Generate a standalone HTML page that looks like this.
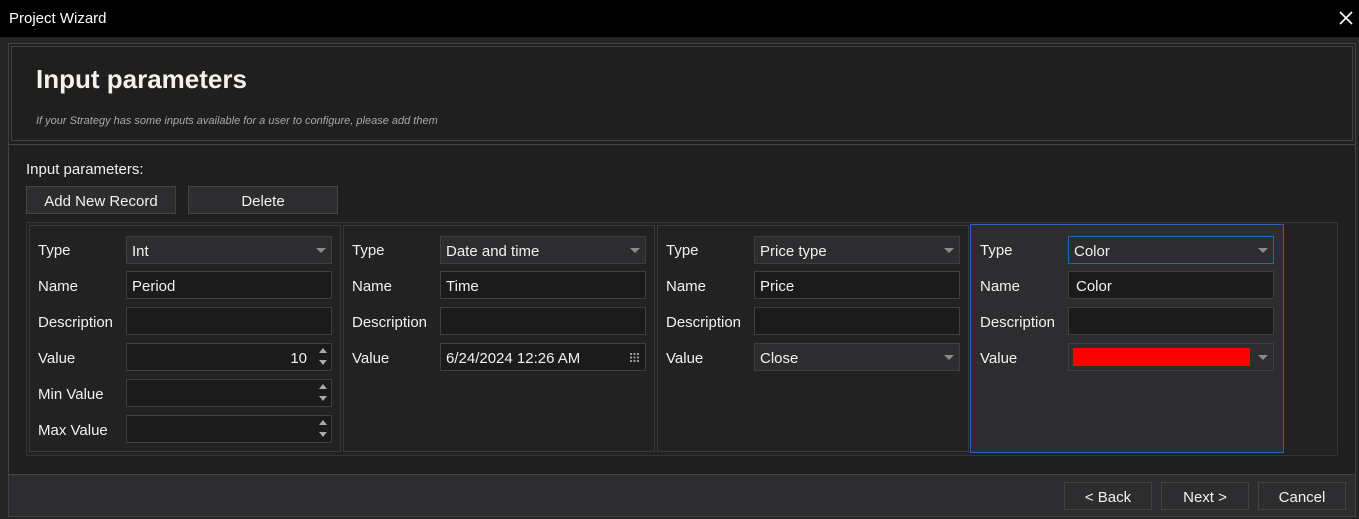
<!DOCTYPE html>
<html><head><meta charset="utf-8"><style>
*{box-sizing:border-box;margin:0;padding:0}
body{width:1359px;height:519px;background:#252526;font-family:"Liberation Sans",sans-serif;color:#f1f1f1;position:relative;overflow:hidden;font-size:15px}
.a{position:absolute}
.tb{left:0;top:0;width:1359px;height:37px;background:#000}
.frame{left:8px;top:43px;width:1348px;height:474px;border:1px solid #434346;background:#1f1f1f}
.card{background:#222;border:1px solid #3a3a3a}
.lbl{font-size:15px;color:#f1f1f1;margin-top:1px}
.in{background:#1b1b1b;border:1px solid #3f3f42;height:28px;width:206px;padding:2px 0 0 5px;line-height:26px;font-size:15px}
.dd{background:#2d2d30}
.arr{position:absolute;right:5px;top:11px;width:0;height:0;border-left:5px solid transparent;border-right:5px solid transparent;border-top:5px solid #8a8a8a}
.sp{position:absolute;right:4px;width:0;height:0;border-left:4px solid transparent;border-right:4px solid transparent}
.btn{background:#2d2d30;border:1px solid #444;text-align:center;font-size:15px;line-height:26px;padding-top:2px}
</style></head><body>
<div class="a tb"></div>
<div class="a" style="left:9px;top:10px;font-size:15px;color:#fff">Project Wizard</div>
<svg class="a" style="left:1339px;top:11px" width="14" height="14"><path d="M1 1L13 13M13 1L1 13" stroke="#fff" stroke-width="1.6"/></svg>
<div class="a frame"></div>
<div class="a" style="left:11px;top:46px;width:1342px;height:95px;border:1px solid #434346"></div>
<div class="a" style="left:36px;top:64px;font-size:26px;font-weight:bold;color:#f5f0e8">Input parameters</div>
<div class="a" style="left:36px;top:115px;font-size:11px;font-style:italic;color:#aaa">If your Strategy has some inputs available for a user to configure, please add them</div>
<div class="a" style="left:9px;top:144px;width:1346px;height:1px;background:#434346"></div>
<div class="a" style="left:26px;top:161px">Input parameters:</div>
<div class="a btn" style="left:26px;top:186px;width:150px;height:28px">Add New Record</div>
<div class="a btn" style="left:188px;top:186px;width:150px;height:28px">Delete</div>
<div class="a" style="left:26px;top:222px;width:1312px;height:234px;border:1px solid #333;background:#222"></div>

<div class="a card" style="left:29px;top:225px;width:312px;height:227px"></div>
<div class="a lbl" style="left:38px;top:241px">Type</div>
<div class="a in dd" style="left:126px;top:236px">Int<span class="arr"></span></div>
<div class="a lbl" style="left:38px;top:277px">Name</div>
<div class="a in" style="left:126px;top:271px">Period</div>
<div class="a lbl" style="left:38px;top:313px">Description</div>
<div class="a in" style="left:126px;top:307px"></div>
<div class="a lbl" style="left:38px;top:349px">Value</div>
<div class="a in" style="left:126px;top:343px;text-align:right;padding-right:24px">10<span class="sp" style="top:4px;border-bottom:5px solid #aaa"></span><span class="sp" style="top:16px;border-top:5px solid #aaa"></span></div>
<div class="a lbl" style="left:38px;top:385px">Min Value</div>
<div class="a in" style="left:126px;top:379px"><span class="sp" style="top:4px;border-bottom:5px solid #aaa"></span><span class="sp" style="top:16px;border-top:5px solid #aaa"></span></div>
<div class="a lbl" style="left:38px;top:421px">Max Value</div>
<div class="a in" style="left:126px;top:415px"><span class="sp" style="top:4px;border-bottom:5px solid #aaa"></span><span class="sp" style="top:16px;border-top:5px solid #aaa"></span></div>

<div class="a card" style="left:343px;top:225px;width:312px;height:227px"></div>
<div class="a lbl" style="left:352px;top:241px">Type</div>
<div class="a in dd" style="left:440px;top:236px">Date and time<span class="arr"></span></div>
<div class="a lbl" style="left:352px;top:277px">Name</div>
<div class="a in" style="left:440px;top:271px">Time</div>
<div class="a lbl" style="left:352px;top:313px">Description</div>
<div class="a in" style="left:440px;top:307px"></div>
<div class="a lbl" style="left:352px;top:349px">Value</div>
<div class="a in" style="left:440px;top:343px">6/24/2024 12:26 AM
<svg style="position:absolute;right:6px;top:9px" width="9" height="9" fill="#999"><rect x="0" y="0" width="2" height="2"/><rect x="3.5" y="0" width="2" height="2"/><rect x="7" y="0" width="2" height="2"/><rect x="0" y="3.5" width="2" height="2"/><rect x="3.5" y="3.5" width="2" height="2"/><rect x="7" y="3.5" width="2" height="2"/><rect x="0" y="7" width="2" height="2"/><rect x="3.5" y="7" width="2" height="2"/><rect x="7" y="7" width="2" height="2"/></svg></div>

<div class="a card" style="left:657px;top:225px;width:312px;height:227px"></div>
<div class="a lbl" style="left:666px;top:241px">Type</div>
<div class="a in dd" style="left:754px;top:236px">Price type<span class="arr"></span></div>
<div class="a lbl" style="left:666px;top:277px">Name</div>
<div class="a in" style="left:754px;top:271px">Price</div>
<div class="a lbl" style="left:666px;top:313px">Description</div>
<div class="a in" style="left:754px;top:307px"></div>
<div class="a lbl" style="left:666px;top:349px">Value</div>
<div class="a in dd" style="left:754px;top:343px">Close<span class="arr"></span></div>

<div class="a" style="left:970px;top:224px;width:314px;height:229px;border:1px solid #2a62b8;background:#2d2d30"></div>
<div class="a lbl" style="left:980px;top:241px">Type</div>
<div class="a in dd" style="left:1068px;top:236px;border-color:#2a62b8">Color<span class="arr"></span></div>
<div class="a lbl" style="left:980px;top:277px">Name</div>
<div class="a in" style="left:1068px;top:271px;padding-left:7px">Color</div>
<div class="a lbl" style="left:980px;top:313px">Description</div>
<div class="a in" style="left:1068px;top:307px"></div>
<div class="a lbl" style="left:980px;top:349px">Value</div>
<div class="a in dd" style="left:1068px;top:343px"><div style="position:absolute;left:4px;top:4px;width:177px;height:18px;background:#f00"></div><span class="arr"></span></div>

<div class="a" style="left:8px;top:474px;width:1348px;height:43px;background:#2d2d30;border:1px solid #434346"></div>
<div class="a btn" style="left:1064px;top:482px;width:88px;height:28px">&lt; Back</div>
<div class="a btn" style="left:1161px;top:482px;width:88px;height:28px">Next &gt;</div>
<div class="a btn" style="left:1258px;top:482px;width:88px;height:28px">Cancel</div>
</body></html>
